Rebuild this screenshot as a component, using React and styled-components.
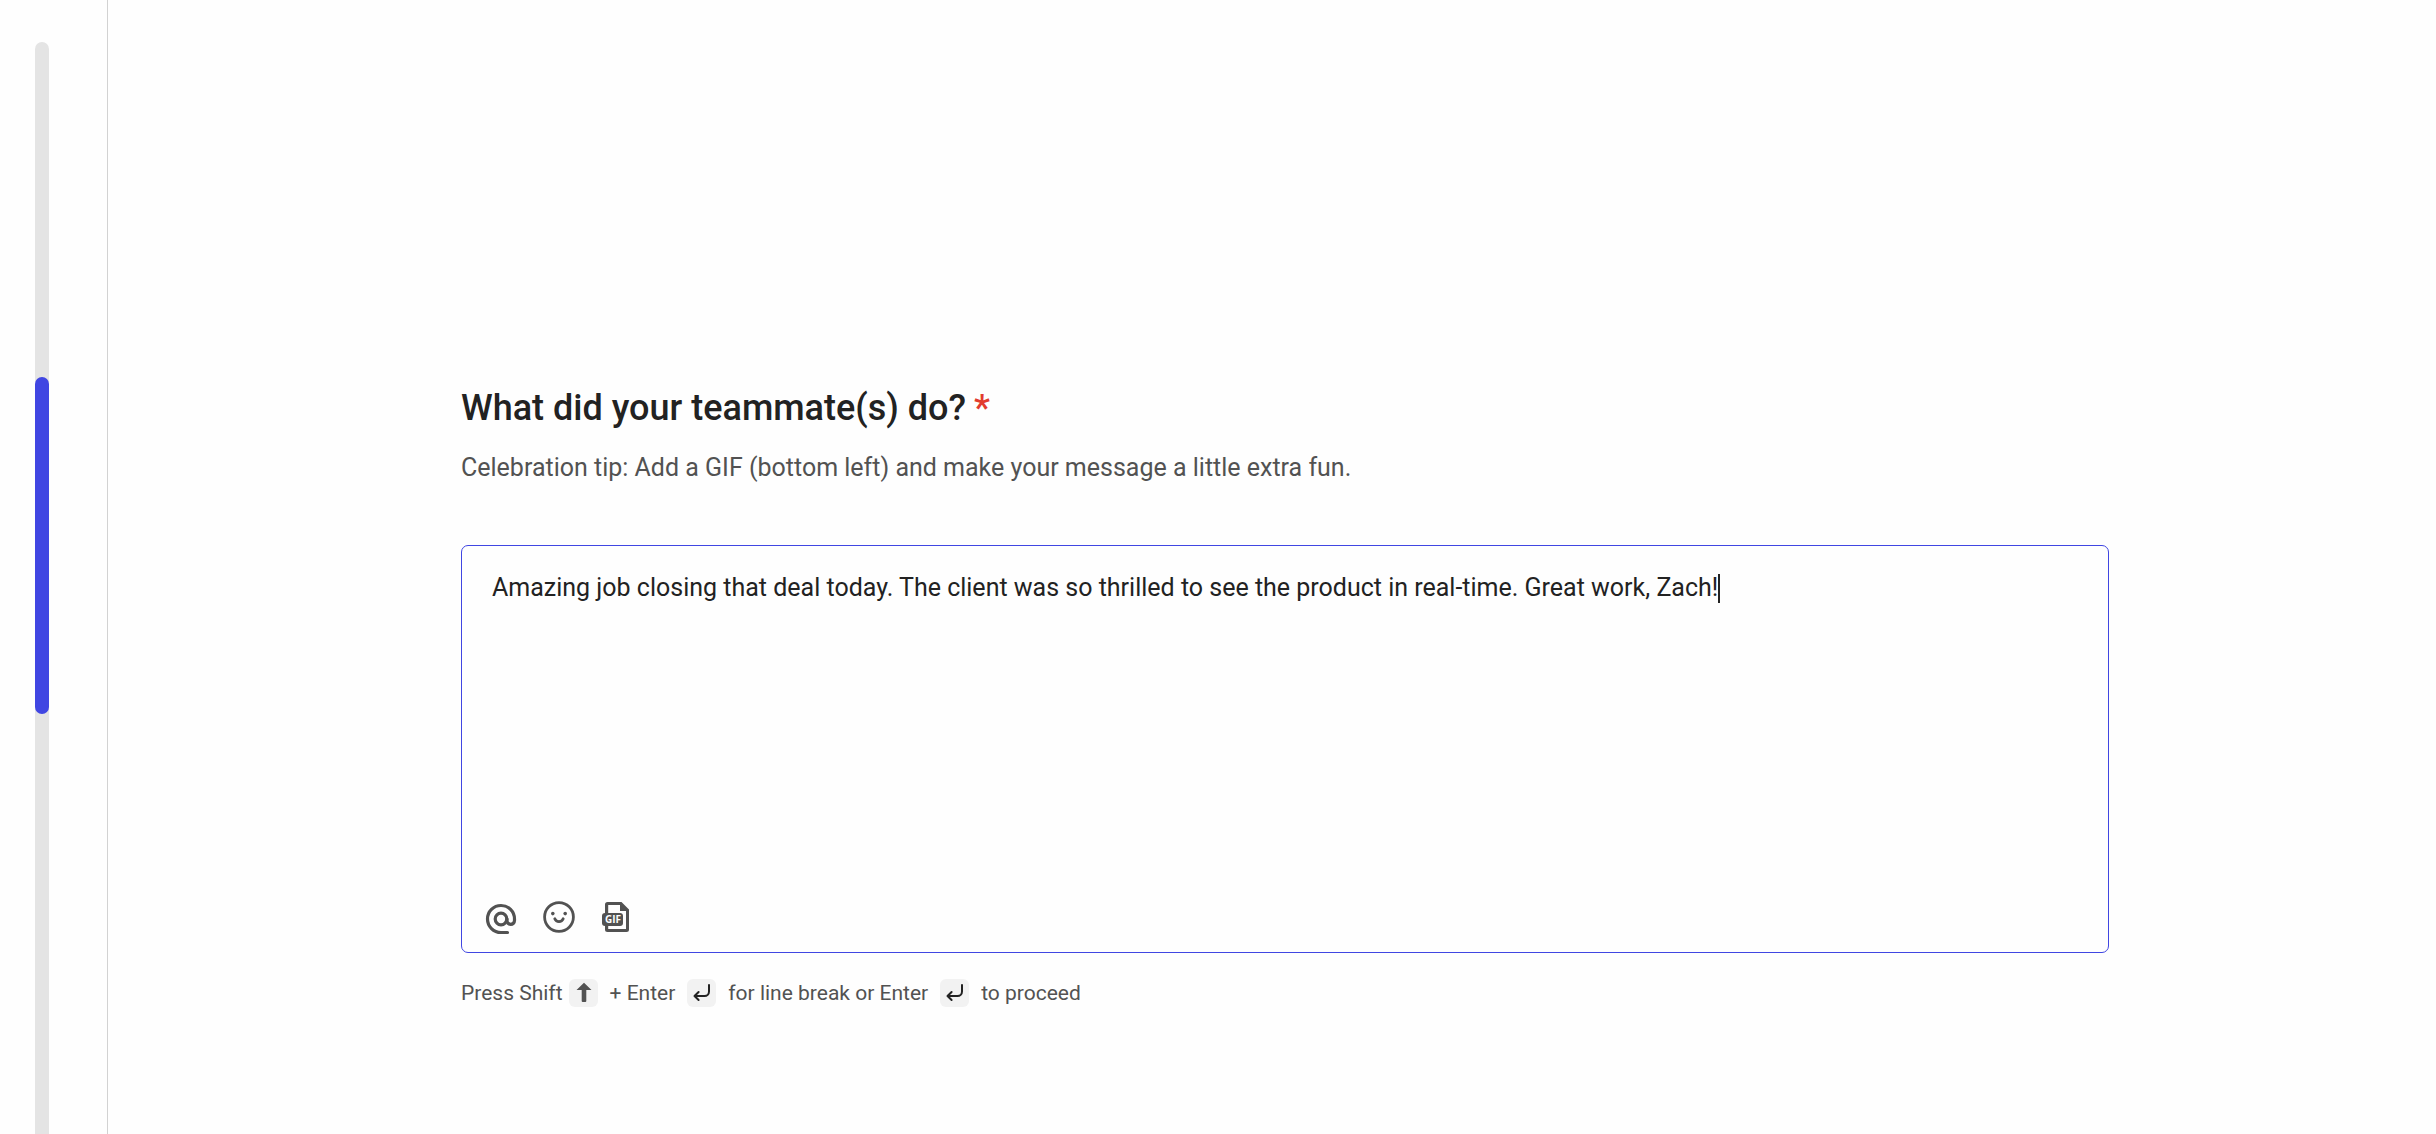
import React from 'react';
import styled, { createGlobalStyle } from 'styled-components';

const COLORS = {
  white: '#fefefe',
  track: '#e4e4e4',
  line: '#d2d2d2',
  blue: '#4046e2',
  text: '#222222',
  grey: '#525252',
  key: '#f2f2f2',
  red: '#e23b2e',
};

const GlobalStyle = createGlobalStyle`
  * {
    box-sizing: border-box;
  }
  body {
    margin: 0;
    background-color: ${COLORS.white};
    color: ${COLORS.text};
    font-family: Roboto, 'Liberation Sans', sans-serif;
  }
`;

const Page = styled.div`
  display: flex;
  min-height: 100vh;
`;

const Sidebar = styled.aside`
  display: flex;
  flex: none;
  width: 108px;
  padding: 42px 0 0 35px;
  border-right: 1px solid ${COLORS.line};
`;

const Track = styled.div`
  width: 14px;
  padding-top: ${({ $offset }) => $offset}px;
  border-radius: 7px 7px 0 0;
  background-color: ${COLORS.track};
`;

const Thumb = styled.div`
  height: 337px;
  border-radius: 7px;
  background-color: ${COLORS.blue};
`;

const Main = styled.main`
  flex: 1;
  min-width: 0;
  padding: 386px 327px 40px 353px;
`;

const Question = styled.label`
  display: flex;
  gap: 8px;
  font-size: 36px;
  line-height: 44px;
  font-weight: 500;
`;

const Required = styled.span`
  color: ${COLORS.red};
`;

const Tip = styled.p`
  margin: 22px 0 61px;
  color: ${COLORS.grey};
  font-size: 25px;
  line-height: 32px;
`;

const Editor = styled.div`
  display: flex;
  flex-direction: column;
  justify-content: space-between;
  min-height: 408px;
  padding: 26px 30px 17px 23px;
  border: 1px solid ${COLORS.blue};
  border-radius: 7px;
`;

const Message = styled.div`
  display: flex;
  align-items: center;
  padding-left: 7px;
`;

const TextArea = styled.textarea`
  display: block;
  field-sizing: content;
  max-width: 100%;
  padding: 0;
  border: 0;
  outline: 0;
  resize: none;
  overflow: hidden;
  background: transparent;
  color: inherit;
  caret-color: transparent;
  font-family: inherit;
  font-size: 25px;
  line-height: 32px;
`;

const Caret = styled.span`
  width: 2px;
  height: 29px;
  background-color: ${COLORS.text};
`;

const Toolbar = styled.div`
  display: flex;
  gap: 26px;
`;

const ToolButton = styled.button`
  display: block;
  padding: 0;
  border: 0;
  background: none;
  color: ${COLORS.grey};
  cursor: pointer;

  svg {
    display: block;
  }
`;

const Hint = styled.p`
  display: flex;
  align-items: center;
  flex-wrap: wrap;
  gap: 12px;
  margin: 26px 0 0;
  color: ${COLORS.grey};
  font-size: 21px;
  line-height: 28px;
`;

const Shortcut = styled.span`
  display: flex;
  gap: 6px;
`;

const Key = styled.kbd`
  display: block;
  width: 29px;
  height: 28px;
  border-radius: 6px;
  background-color: ${COLORS.key};

  svg {
    display: block;
  }
`;

const MentionIcon = () => (
  <svg width="32" height="34" viewBox="0 0 32 34" fill="none" stroke="currentColor" strokeWidth="3.2" strokeLinecap="round">
    <circle cx="16" cy="18" r="5.800" />
    <path d="M22.5 31.5H16A13.5 13.5 0 1 1 29.5 18v1.600a3.700 3.700 0 0 1-7.500 0V18" />
  </svg>
);

const EmojiIcon = () => (
  <svg width="32" height="34" viewBox="0 0 32 34" fill="none" stroke="currentColor" strokeWidth="2.8" strokeLinecap="round">
    <circle cx="16" cy="16" r="14.4" />
    <path d="M11.800 17.800c.7 1.800 2.200 2.800 4.200 2.800s3.500-1 4.200-2.800" />
    <circle cx="9.800" cy="12.600" r="1.800" fill="currentColor" stroke="none" />
    <circle cx="22.200" cy="12.600" r="1.800" fill="currentColor" stroke="none" />
  </svg>
);

const GifIcon = () => (
  <svg width="32" height="34" viewBox="0 0 32 34" fill="currentColor">
    <path
      fillRule="evenodd"
      d="M6.500 1h14L28 8.500V28.500a2.500 2.500 0 0 1-2.500 2.500h-19a2.500 2.500 0 0 1-2.500-2.500V3.500A2.500 2.500 0 0 1 6.500 1ZM7.200 4v24H25V10h-6V4Z"
    />
    <rect x="1" y="12" width="21" height="13" rx="3" />
    <text x="4" y="22" fontFamily="'Open Sans', sans-serif" fontSize="10" fontWeight="700" fill={COLORS.white}>
      GIF
    </text>
  </svg>
);

const ShiftKey = () => (
  <Key>
    <svg width="29" height="28" viewBox="0 0 29 28" fill={COLORS.grey}>
      <path d="M15 3.700 22.500 11h-5.200v11a1 1 0 0 1-1 1h-2.600a1 1 0 0 1-1-1V11H7.500Z" />
    </svg>
  </Key>
);

const EnterKey = () => (
  <Key>
    <svg width="29" height="28" viewBox="0 0 29 28" fill="none" stroke={COLORS.text} strokeWidth="2" strokeLinecap="round" strokeLinejoin="round">
      <path d="M22 6v6.500a4.500 4.500 0 0 1-4.500 4.500H7.500M11.600 13 7.500 17l4.100 4" />
    </svg>
  </Key>
);

const TOOLS = [
  { name: 'Mention', Icon: MentionIcon },
  { name: 'Emoji', Icon: EmojiIcon },
  { name: 'GIF', Icon: GifIcon },
];

const App = () => {
  const [message, setMessage] = React.useState(
    'Amazing job closing that deal today. The client was so thrilled to see the product in real-time. Great work, Zach!'
  );

  const handleChange = (e) => {
    setMessage(e.target.value);
  };

  return (
    <>
      <GlobalStyle />
      <Page>
        <Sidebar>
          <Track $offset={335}>
            <Thumb />
          </Track>
        </Sidebar>
        <Main>
          <Question htmlFor="message">
            What did your teammate(s) do?
            <Required>*</Required>
          </Question>
          <Tip id="tip">Celebration tip: Add a GIF (bottom left) and make your message a little extra fun.</Tip>
          <Editor>
            <Message>
              <TextArea
                id="message"
                rows={1}
                aria-describedby="tip"
                spellCheck={false}
                value={message}
                onChange={handleChange}
              />
              <Caret />
            </Message>
            <Toolbar>
              {TOOLS.map(({ name, Icon }) => (
                <ToolButton key={name} type="button" aria-label={name}>
                  <Icon />
                </ToolButton>
              ))}
            </Toolbar>
          </Editor>
          <Hint>
            <Shortcut>
              Press Shift
              <ShiftKey />
            </Shortcut>
            <span>+ Enter</span>
            <EnterKey />
            <span>for line break or Enter</span>
            <EnterKey />
            <span>to proceed</span>
          </Hint>
        </Main>
      </Page>
    </>
  );
};

export default App;
